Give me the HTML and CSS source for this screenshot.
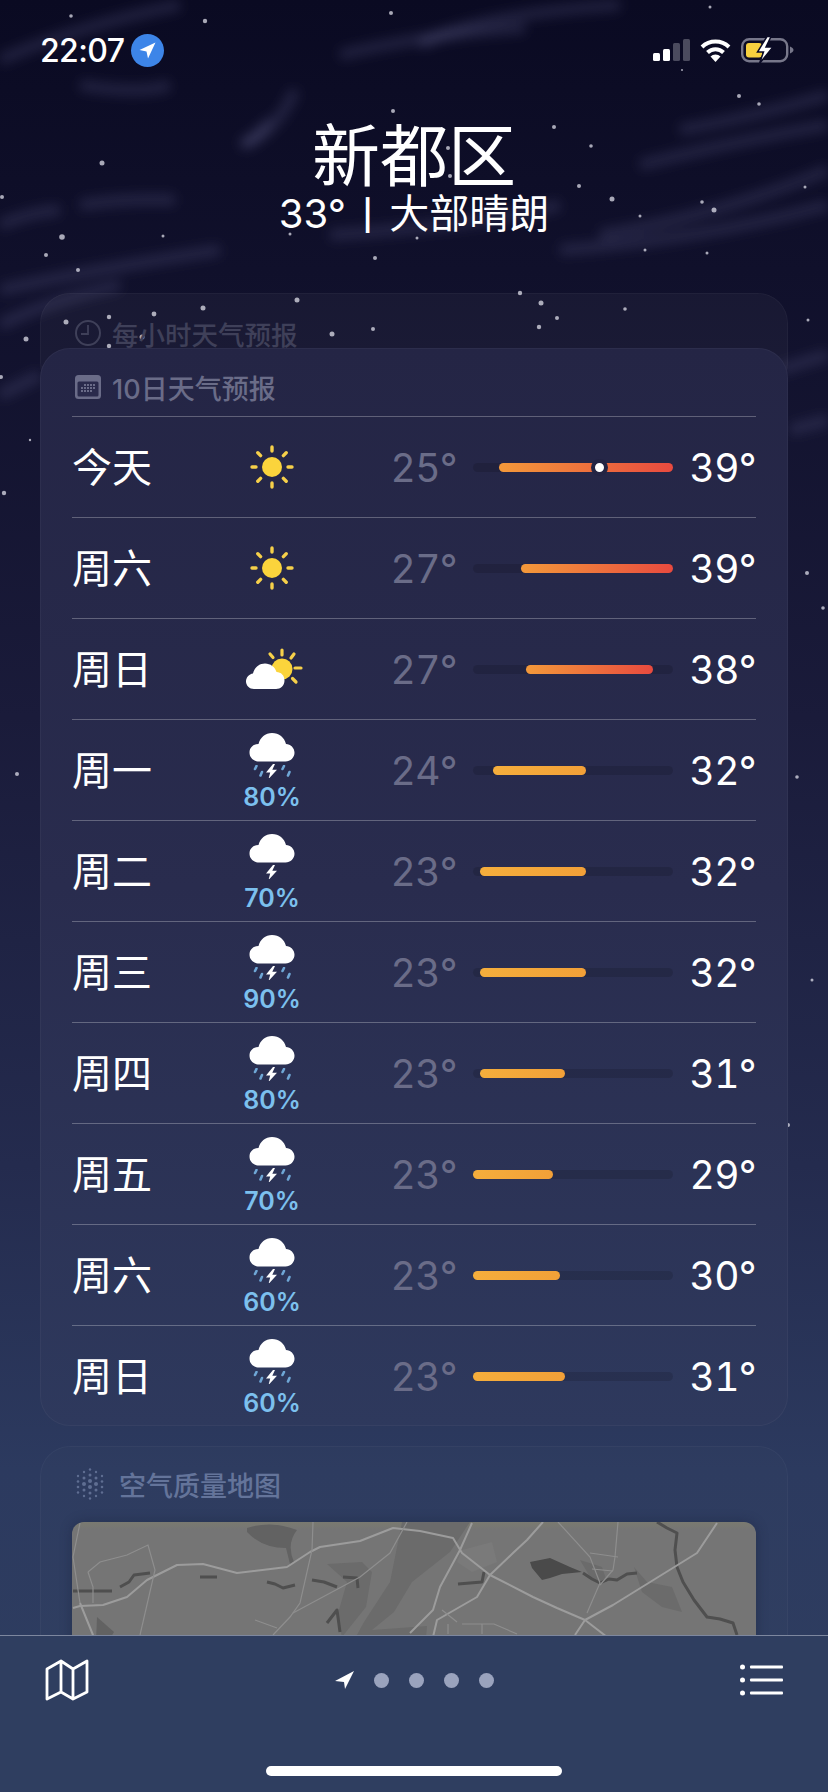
FILE: index.html
```html
<!DOCTYPE html>
<html lang="zh-CN">
<head>
    <meta charset="UTF-8">
    <meta name="viewport" content="width=device-width, initial-scale=1.0">
    <title>天气</title>
    <link rel="stylesheet" href="styles.css">
</head>
<body>
    <svg class="defs" width="0" height="0">
        <defs>
            <symbol id="sun" viewBox="0 0 44 44">
                <circle cx="22" cy="22" r="10" fill="#fbd43c"/>
                <g stroke="#f6d04a" stroke-width="3.4" stroke-linecap="round">
                    <path d="M22 2v4M22 38v4M2 22h4M38 22h4M7.8 7.8l2.8 2.8M33.4 33.4l2.8 2.8M7.8 36.2l2.8-2.8M33.4 10.6l2.8-2.8"/>
                </g>
            </symbol>
            <symbol id="cloud" viewBox="0 0 46 30">
                <path d="M10 29.5C4.5 29.5.5 25.500.5 20.500S4.500 12 9.500 12C11 5.500 16.500 1 23 1c7 0 12.500 4.500 14 11 4.500 0 8.500 4 8.500 8.700s-4 8.800-9 8.800z" fill="#fff"/>
            </symbol>
            <symbol id="bolt" viewBox="0 0 12 15">
                <path d="M7 0 0 8.500h4.200L2.500 15 11 5.700H6.300L9 0z" fill="#fff"/>
            </symbol>
            <symbol id="drops" viewBox="0 0 46 12">
                <g stroke="#6fa7d6" stroke-width="2.600" stroke-linecap="round">
                    <path d="M7.500 1 6 4M13 7 11.500 10.500M35 1 33.500 4M40.500 7 39 10.500"/>
                </g>
            </symbol>
        </defs>
    </svg>

    <div class="screen">
        <svg class="sky" viewBox="0 0 828 1792" width="828" height="1792">
            <defs>
                <filter id="soft" x="-20%" y="-200%" width="140%" height="500%">
                    <feGaussianBlur stdDeviation="6"/>
                </filter>
            </defs>
            <g class="wisps" filter="url(#soft)">
                <path d="M340 55Q420 35 525 28"/>
                <path d="M420 45Q470 15 620 5"/>
                <path d="M240 145Q275 135 295 90"/>
                <path d="M245 145Q270 125 265 120"/>
                <path d="M80 205Q130 198 175 200"/>
                <path d="M0 225Q30 212 60 210"/>
                <path d="M330 235Q480 225 560 205"/>
                <path d="M680 130Q760 115 828 95"/>
                <path d="M640 165Q740 140 828 125"/>
                <path d="M600 235Q720 215 828 170"/>
                <path d="M560 250Q700 240 828 205"/>
                <path d="M0 290Q90 270 220 250"/>
                <path d="M0 325Q50 300 120 285"/>
                <path d="M0 395Q20 385 40 375"/>
                <path d="M780 370Q810 360 828 355"/>
                <path d="M790 430Q810 425 828 420"/>
                <path d="M0 60Q80 25 180 5"/>
                <path d="M80 85Q140 95 170 85"/>
            </g>
            <g class="stars">
                <circle cx="71" cy="16" r="1.800"/><circle cx="205" cy="21" r="2.200"/><circle cx="391" cy="13" r="2"/>
                <circle cx="710" cy="7" r="1.500"/><circle cx="393" cy="111" r="2"/><circle cx="554" cy="127" r="2"/>
                <circle cx="591" cy="146" r="1.800"/><circle cx="739" cy="96" r="2"/><circle cx="759" cy="104" r="1.800"/>
                <circle cx="102" cy="163" r="2.500"/><circle cx="448" cy="148" r="2"/><circle cx="450" cy="176" r="2"/>
                <circle cx="579" cy="186" r="2"/><circle cx="612" cy="199" r="2.500"/><circle cx="702" cy="202" r="1.800"/>
                <circle cx="714" cy="210" r="2.500"/><circle cx="640" cy="216" r="1.500"/><circle cx="62" cy="237" r="2.800"/>
                <circle cx="163" cy="236" r="1.500"/><circle cx="46" cy="255" r="2"/><circle cx="375" cy="258" r="2"/>
                <circle cx="417" cy="238" r="1.500"/><circle cx="290" cy="234" r="1.500"/><circle cx="645" cy="250" r="1.500"/>
                <circle cx="707" cy="253" r="1.500"/><circle cx="805" cy="187" r="1.500"/><circle cx="2" cy="197" r="2"/>
                <circle cx="682" cy="70" r="1"/><circle cx="78" cy="270" r="2"/><circle cx="66" cy="322" r="2.500"/>
                <circle cx="109" cy="317" r="2.200"/><circle cx="154" cy="314" r="2.400"/><circle cx="203" cy="308" r="2.500"/>
                <circle cx="297" cy="300" r="2.500"/><circle cx="142" cy="337" r="2.500"/><circle cx="109" cy="346" r="2.200"/>
                <circle cx="332" cy="334" r="2.500"/><circle cx="373" cy="329" r="2"/><circle cx="520" cy="293" r="2.200"/>
                <circle cx="541" cy="303" r="2.500"/><circle cx="557" cy="318" r="2"/><circle cx="539" cy="327" r="2.200"/>
                <circle cx="625" cy="309" r="1.800"/><circle cx="26" cy="339" r="2.500"/><circle cx="1" cy="377" r="2"/>
                <circle cx="4" cy="493" r="2.200"/><circle cx="17" cy="774" r="2"/><circle cx="788" cy="1125" r="2"/>
                <circle cx="797" cy="777" r="1.800"/><circle cx="807" cy="573" r="2"/><circle cx="823" cy="608" r="1.800"/>
                <circle cx="808" cy="320" r="1.500"/><circle cx="30" cy="440" r="1.200"/><circle cx="812" cy="980" r="1.500"/>
            </g>
        </svg>

        <div class="status-bar">
            <div class="status-left">
                <span class="clock-time">22:07</span>
                <span class="loc-badge">
                    <svg width="17" height="17" viewBox="0 0 17 17"><path d="M16.500.500.500 8l7 1.500L9 16.500z" fill="#fff"/></svg>
                </span>
            </div>
            <div class="status-right">
                <svg class="signal" width="37" height="22" viewBox="0 0 37 22">
                    <rect x="0" y="14" width="7" height="8" rx="1.500" fill="#fff"/>
                    <rect x="10" y="10" width="7" height="12" rx="1.500" fill="#fff"/>
                    <rect x="20" y="4" width="7" height="18" rx="1.500" fill="#4b4b5e"/>
                    <rect x="30" y="0" width="7" height="22" rx="1.500" fill="#4b4b5e"/>
                </svg>
                <svg class="wifi" width="31" height="24" viewBox="0 0 31 24">
                    <path d="M2 9A19.500 19.500 0 0 1 29 9M7.500 14.500A11.500 11.500 0 0 1 23.500 14.500" fill="none" stroke="#fff" stroke-width="4"/>
                    <path d="M10.500 18.500a7 7 0 0 1 10 0l-5 5.500z" fill="#fff"/>
                </svg>
                <svg class="battery" width="53" height="28" viewBox="0 0 53 28">
                    <rect x="1.200" y="3.200" width="45" height="22" rx="7" fill="none" stroke="#77778a" stroke-width="2.400"/>
                    <rect x="5" y="7" width="16" height="14.500" rx="3" fill="#f7d03f"/>
                    <path d="M49 10.500c2 .7 3.500 2 3.500 3.500s-1.500 2.800-3.500 3.500z" fill="#77778a"/>
                    <path d="M26 .500 16.500 16h6L18.500 27.500 32 11h-7L30 .500z" fill="#fff" stroke="#0b0b26" stroke-width="1.500"/>
                </svg>
            </div>
        </div>

        <header class="place">
            <h1>新都区</h1>
            <p>33° <span class="pipe">|</span> 大部晴朗</p>
        </header>

        <section class="card card-back">
            <div class="card-title">
                <svg width="26" height="26" viewBox="0 0 26 26"><circle cx="13" cy="13" r="12" fill="none" stroke="#3f4059" stroke-width="2"/><path d="M13 5v9H6" fill="none" stroke="#3f4059" stroke-width="1.800"/></svg>
                <span>每小时天气预报</span>
            </div>
        </section>

        <section class="card card-main">
            <div class="card-title">
                <svg width="26" height="24" viewBox="0 0 26 24">
                    <rect width="26" height="24" rx="3.500" fill="#6a6c88"/>
                    <rect x="2.500" y="6.500" width="21" height="15" rx="1.500" fill="#2a2b4c"/>
                    <g fill="#6a6c88">
                        <rect x="9" y="9" width="2" height="2"/><rect x="12" y="9" width="2" height="2"/><rect x="15" y="9" width="2" height="2"/><rect x="18" y="9" width="2" height="2"/>
                        <rect x="6" y="12" width="2" height="2"/><rect x="9" y="12" width="2" height="2"/><rect x="12" y="12" width="2" height="2"/><rect x="15" y="12" width="2" height="2"/><rect x="18" y="12" width="2" height="2"/>
                        <rect x="6" y="15" width="2" height="2"/><rect x="9" y="15" width="2" height="2"/><rect x="12" y="15" width="2" height="2"/><rect x="15" y="15" width="2" height="2"/>
                    </g>
                </svg>
                <span>10日天气预报</span>
            </div>

            <div class="day-row">
                <span class="day">今天</span>
                <span class="sky-icon"><svg class="ic-sun" width="44" height="44"><use href="#sun"/></svg></span>
                <span class="low">25°</span>
                <span class="track"><span class="fill hot" style="left:26px;width:174px"></span><span class="now" style="left:126px"></span></span>
                <span class="high">39°</span>
            </div>
            <div class="day-row">
                <span class="day">周六</span>
                <span class="sky-icon"><svg class="ic-sun" width="44" height="44"><use href="#sun"/></svg></span>
                <span class="low">27°</span>
                <span class="track"><span class="fill hot" style="left:48px;width:152px"></span></span>
                <span class="high">39°</span>
            </div>
            <div class="day-row">
                <span class="day">周日</span>
                <span class="sky-icon">
                    <svg class="ic-partly" width="58" height="42" viewBox="0 0 58 42">
                        <circle cx="36" cy="21" r="10.500" fill="#fbd43c"/>
                        <path d="M36 2v5M48 6l-3 4M55 20h-6M50 34l-3.500-3.500M24 6l3 3.500" stroke="#f6d04a" stroke-width="3.200" stroke-linecap="round"/>
                        <path d="M8 41C3.500 41 0 37.500 0 33.500S3 26 7 25.500C8.500 19.500 13 15.500 19 15.500c5.500 0 10 3.500 11.500 8.500 4.500 0 8 3.500 8 8.500s-4 8.500-8.500 8.500z" fill="#fff"/>
                    </svg>
                </span>
                <span class="low">27°</span>
                <span class="track"><span class="fill hot" style="left:53px;width:127px"></span></span>
                <span class="high">38°</span>
            </div>
            <div class="day-row">
                <span class="day">周一</span>
                <span class="sky-icon storm">
                    <svg width="46" height="46" viewBox="0 0 46 46"><use href="#cloud" width="46" height="30"/><use href="#drops" y="33" width="46" height="12"/><use href="#bolt" x="17" y="32" width="12" height="15"/></svg>
                    <span class="rain">80%</span>
                </span>
                <span class="low">24°</span>
                <span class="track"><span class="fill warm" style="left:20px;width:93px"></span></span>
                <span class="high">32°</span>
            </div>
            <div class="day-row">
                <span class="day">周二</span>
                <span class="sky-icon storm">
                    <svg width="46" height="46" viewBox="0 0 46 46"><use href="#cloud" width="46" height="30"/><use href="#bolt" x="17" y="32" width="12" height="15"/></svg>
                    <span class="rain">70%</span>
                </span>
                <span class="low">23°</span>
                <span class="track"><span class="fill warm" style="left:7px;width:106px"></span></span>
                <span class="high">32°</span>
            </div>
            <div class="day-row">
                <span class="day">周三</span>
                <span class="sky-icon storm">
                    <svg width="46" height="46" viewBox="0 0 46 46"><use href="#cloud" width="46" height="30"/><use href="#drops" y="33" width="46" height="12"/><use href="#bolt" x="17" y="32" width="12" height="15"/></svg>
                    <span class="rain">90%</span>
                </span>
                <span class="low">23°</span>
                <span class="track"><span class="fill warm" style="left:7px;width:106px"></span></span>
                <span class="high">32°</span>
            </div>
            <div class="day-row">
                <span class="day">周四</span>
                <span class="sky-icon storm">
                    <svg width="46" height="46" viewBox="0 0 46 46"><use href="#cloud" width="46" height="30"/><use href="#drops" y="33" width="46" height="12"/><use href="#bolt" x="17" y="32" width="12" height="15"/></svg>
                    <span class="rain">80%</span>
                </span>
                <span class="low">23°</span>
                <span class="track"><span class="fill warm" style="left:7px;width:85px"></span></span>
                <span class="high">31°</span>
            </div>
            <div class="day-row">
                <span class="day">周五</span>
                <span class="sky-icon storm">
                    <svg width="46" height="46" viewBox="0 0 46 46"><use href="#cloud" width="46" height="30"/><use href="#drops" y="33" width="46" height="12"/><use href="#bolt" x="17" y="32" width="12" height="15"/></svg>
                    <span class="rain">70%</span>
                </span>
                <span class="low">23°</span>
                <span class="track"><span class="fill warm" style="left:0;width:80px"></span></span>
                <span class="high">29°</span>
            </div>
            <div class="day-row">
                <span class="day">周六</span>
                <span class="sky-icon storm">
                    <svg width="46" height="46" viewBox="0 0 46 46"><use href="#cloud" width="46" height="30"/><use href="#drops" y="33" width="46" height="12"/><use href="#bolt" x="17" y="32" width="12" height="15"/></svg>
                    <span class="rain">60%</span>
                </span>
                <span class="low">23°</span>
                <span class="track"><span class="fill warm" style="left:0;width:87px"></span></span>
                <span class="high">30°</span>
            </div>
            <div class="day-row">
                <span class="day">周日</span>
                <span class="sky-icon storm">
                    <svg width="46" height="46" viewBox="0 0 46 46"><use href="#cloud" width="46" height="30"/><use href="#drops" y="33" width="46" height="12"/><use href="#bolt" x="17" y="32" width="12" height="15"/></svg>
                    <span class="rain">60%</span>
                </span>
                <span class="low">23°</span>
                <span class="track"><span class="fill warm" style="left:0;width:92px"></span></span>
                <span class="high">31°</span>
            </div>
        </section>

        <section class="card card-air">
            <div class="card-title air-title">
                <svg width="28" height="32" viewBox="0 0 28 32">
                    <g fill="#5f6e92">
                        <circle cx="14" cy="1.500" r="1.200"/><circle cx="8" cy="4" r="1.200"/><circle cx="20" cy="4" r="1.200"/>
                        <circle cx="14" cy="7" r="1.500"/><circle cx="2" cy="8" r="1.200"/><circle cx="26" cy="8" r="1.200"/>
                        <circle cx="8" cy="10" r="1.500"/><circle cx="20" cy="10" r="1.500"/><circle cx="14" cy="13" r="2"/>
                        <circle cx="2" cy="13.500" r="1.300"/><circle cx="26" cy="13.500" r="1.300"/><circle cx="8" cy="16" r="2"/>
                        <circle cx="20" cy="16" r="2"/><circle cx="14" cy="19" r="2"/><circle cx="2" cy="19" r="1.300"/>
                        <circle cx="26" cy="19" r="1.300"/><circle cx="8" cy="22" r="1.500"/><circle cx="20" cy="22" r="1.500"/>
                        <circle cx="14" cy="25" r="1.500"/><circle cx="2" cy="24.500" r="1.200"/><circle cx="26" cy="24.500" r="1.200"/>
                        <circle cx="8" cy="28" r="1.200"/><circle cx="20" cy="28" r="1.200"/><circle cx="14" cy="30.500" r="1.200"/>
                    </g>
                </svg>
                <span>空气质量地图</span>
            </div>
            <div class="air-map">
                <svg width="684" height="140" viewBox="0 0 684 140">
                    <g fill="#6b6b6b">
                        <path d="M330 0 398 0 378 30 340 60 322 90 300 108 355 104 352 140 270 140 292 100 318 60 325 25z"/>
                        <path d="M255 42 290 40 300 50 294 85 270 115 265 95 275 60z"/>
                        <path d="M562 45 575 60 600 65 610 90 590 85 570 70z"/>
                        <path d="M508 38 530 45 535 60 520 58z"/>
                    </g>
                    <path d="M390 28 420 20 425 40 400 50 385 40z" fill="#7a7a7a"/>
                    <path d="M175 6Q200 -2 225 8 214 22 222 40L218 42 214 26Q190 26 175 10z" fill="#626262"/>
                    <path d="M25 95 42 110 30 130 24 120z" fill="#626262"/>
                    <path d="M458 40 478 36 498 45 510 50 490 52 478 56 470 58 460 46z" fill="#4a4a4a"/>
                    <g class="rivers">
                        <path d="M585 0 595 6 605 11 603 28 605 45 611 60 622 78 635 95 648 97 661 101 665 113"/>
                        <path d="M511 51 520 57 528 61 537 57 545 58 555 52 565 51"/>
                        <path d="M48 65 57 60 62 53 70 52 78 51"/>
                        <path d="M128 55H145"/>
                        <path d="M195 60 203 62 211 66 223 63"/>
                        <path d="M240 58 252 60 265 65"/>
                        <path d="M271 55 285 56 286 66"/>
                        <path d="M1 69H40"/>
                        <path d="M255 101 265 88 268 110"/>
                        <path d="M386 62 410 60 412 50"/>
                    </g>
                    <g class="roads">
                        <path d="M1 86 8 84 31 83 55 75 75 58 105 43 131 42 165 51 215 45 238 30 248 25 288 19 321 6 348 9 381 16 390 31 418 53 461 75 485 86 513 98 541 83 625 31 645 1"/>
                        <path d="M418 53 441 31 455 18 471 0"/>
                        <path d="M418 53 405 75 365 98 361 115"/>
                        <path d="M400 1 388 28 368 65 361 88 338 111"/>
                        <path d="M513 98 535 115M513 98 503 113"/>
                        <path d="M8 81 21 113 28 125"/>
                    </g>
                    <g class="lanes">
                        <path d="M486 0 518 35 528 61 515 91"/>
                        <path d="M546 0 543 35 541 48 528 63"/>
                        <path d="M518 31 546 35M520 47 541 49"/>
                        <path d="M241 0 240 28 228 81 218 95 201 113"/>
                        <path d="M335 0 318 31 288 55 221 91"/>
                        <path d="M16 50 28 40 55 33 76 23 83 48 68 113"/>
                        <path d="M16 50 21 65 21 81"/>
                        <path d="M8 1 1 35 8 81"/>
                        <path d="M183 98 205 106"/>
                        <path d="M390 102H422L445 112M410 102V112M376 102V112"/>
                        <path d="M370 88 385 100"/>
                    </g>
                </svg>
                <span class="map-label">高新城区</span>
            </div>
        </section>

        <nav class="tab-bar">
            <div class="tab-row">
                <svg width="44" height="42" viewBox="0 0 44 42">
                    <path d="M2 10 16 2 28 10 42 2V33L28 40 16 33 2 40z M16 2V33M28 10V40" fill="none" stroke="#fff" stroke-width="2.800" stroke-linejoin="round"/>
                </svg>
                <div class="pager">
                    <svg width="19" height="18" viewBox="0 0 19 18"><path d="M19 0 0 10 9 11 10 18z" fill="#fff"/></svg>
                    <span class="page-dot"></span>
                    <span class="page-dot"></span>
                    <span class="page-dot"></span>
                    <span class="page-dot"></span>
                </div>
                <svg width="43" height="32" viewBox="0 0 43 32">
                    <g fill="#fff">
                        <circle cx="2.500" cy="3" r="2.500"/><circle cx="2.500" cy="16" r="2.500"/><circle cx="2.500" cy="29" r="2.500"/>
                        <rect x="10" y="1.500" width="33" height="3" rx="1"/><rect x="10" y="14.500" width="33" height="3" rx="1"/><rect x="10" y="27.500" width="33" height="3" rx="1"/>
                    </g>
                </svg>
            </div>
            <div class="home-bar"></div>
        </nav>
    </div>
</body>
</html>
```

FILE: styles.css
```css
:root {
    --muted: #6a6c88;
    --rain: #7cc0ee;
    --line: rgba(255, 255, 255, 0.27);
}

* {
    margin: 0;
    padding: 0;
    box-sizing: border-box;
    font-family: Inter, 'Noto Sans CJK SC', sans-serif;
}

body {
    background-color: #0b0b26;
}

.defs {
    position: absolute;
}

.screen {
    position: relative;
    width: 828px;
    height: 1792px;
    overflow: hidden;
    color: white;
    background: linear-gradient(180deg, #0a0a22 0%, #10102b 15%, #1a1b3a 40%, #242b4e 65%, #2c3a5f 82%, #2f3e60 100%);
}

.sky {
    position: absolute;
    top: 0;
    left: 0;
}

.wisps path {
    fill: none;
    stroke: rgba(125, 125, 175, 0.2);
    stroke-width: 11;
}

.stars circle {
    fill: rgba(235, 235, 245, 0.7);
}

/* status bar */
.status-bar {
    position: relative;
    display: flex;
    justify-content: space-between;
    align-items: center;
    height: 100px;
    padding: 0 34px 0 40px;
}

.status-left {
    display: flex;
    align-items: center;
    gap: 7px;
}

.clock-time {
    font-size: 32px;
    font-weight: 500;
    letter-spacing: -0.6px;
}

.loc-badge {
    display: flex;
    align-items: center;
    justify-content: center;
    width: 33px;
    height: 33px;
    border-radius: 50%;
    background-color: #3d85e8;
}

.status-right {
    display: flex;
    align-items: center;
    gap: 10px;
}

/* place heading */
.place {
    position: relative;
    height: 193px;
    padding-top: 20px;
    text-align: center;
}

.place h1 {
    font-size: 68px;
    font-weight: 400;
    line-height: 72px;
}

.place p {
    font-size: 40px;
    font-weight: 400;
    line-height: 44px;
}

.pipe {
    font-size: 30px;
    font-weight: 600;
    padding: 0 5px;
    vertical-align: 2px;
}

/* cards */
.card {
    position: relative;
    width: 748px;
    margin-left: 40px;
    border-radius: 30px;
    padding: 0 32px;
}

.card-back {
    height: 100px;
    margin-bottom: -45px;
    background-color: rgba(255, 255, 255, 0.035);
    box-shadow: inset 0 0 0 1px rgba(255, 255, 255, 0.035);
}

.card-main {
    background: linear-gradient(180deg, #242545 0%, #292c4e 50%, #2e395d 100%);
    box-shadow: inset 0 0 0 1px rgba(255, 255, 255, 0.04);
    margin-bottom: 20px;
}

.card-air {
    height: 400px;
    background-color: rgba(255, 255, 255, 0.012);
    box-shadow: inset 0 0 0 1px rgba(255, 255, 255, 0.035);
}

.card-title {
    display: flex;
    align-items: center;
    gap: 11px;
    height: 68px;
    padding: 10px 3px 0;
    font-size: 27px;
    font-weight: 500;
    color: var(--muted);
}

.card-back .card-title {
    padding-top: 12px;
    font-size: 26.5px;
    color: #3f4059;
}

.air-title {
    height: 76px;
    padding: 0 0 0 4px;
    gap: 15px;
    color: #64749a;
}

/* day rows */
.day-row {
    display: flex;
    align-items: center;
    height: 101px;
    border-top: 1px solid var(--line);
}

.day {
    width: 150px;
    padding-bottom: 5px;
    font-size: 40px;
    font-weight: 400;
}

.sky-icon {
    display: flex;
    flex-direction: column;
    align-items: center;
    width: 100px;
}

.ic-partly {
    margin-left: 6px;
}

.storm {
    gap: 6px;
    padding-top: 2px;
}

.rain {
    font-size: 25px;
    font-weight: 600;
    line-height: 26px;
    color: var(--rain);
}

.low,
.high {
    font-size: 39px;
    font-weight: 400;
    letter-spacing: -0.6px;
    font-variant-numeric: tabular-nums;
    text-align: right;
}

.low {
    width: 135px;
    color: var(--muted);
}

.high {
    width: 83px;
}

.track {
    position: relative;
    width: 200px;
    height: 9px;
    margin-left: 16px;
    border-radius: 5px;
    background-color: rgba(0, 0, 0, 0.13);
}

.fill {
    position: absolute;
    top: 0;
    height: 9px;
    border-radius: 5px;
}

.hot {
    background: linear-gradient(90deg, #f3993a, #e84a3f);
}

.warm {
    background: linear-gradient(90deg, #f5ae3c, #f2a038);
}

.now {
    position: absolute;
    top: -4px;
    width: 17px;
    height: 17px;
    margin-left: -8px;
    border: 4px solid #232443;
    border-radius: 50%;
    background-color: white;
}

/* air quality map */
.air-map {
    position: relative;
    height: 240px;
    border-radius: 12px;
    overflow: hidden;
    background: linear-gradient(180deg, #7a7a70 0, #757575 8px);
    box-shadow: 0 0 12px rgba(20, 25, 50, 0.35);
}

.air-map svg {
    display: block;
}

.rivers path {
    fill: none;
    stroke: #4f4f4f;
    stroke-width: 3;
    stroke-linejoin: round;
}

.roads path {
    fill: none;
    stroke: #9c9c9c;
    stroke-width: 2;
    stroke-linejoin: round;
}

.lanes path {
    fill: none;
    stroke: #8e8e8e;
    stroke-width: 1.200;
}

.map-label {
    position: absolute;
    top: 108px;
    left: 352px;
    font-size: 24px;
    font-weight: 500;
    letter-spacing: 1px;
}

/* bottom bar */
.tab-bar {
    position: absolute;
    left: 0;
    right: 0;
    bottom: 0;
    height: 157px;
    border-top: 1px solid #7d879f;
    background-color: #2f3e60;
}

.tab-row {
    display: flex;
    justify-content: space-between;
    align-items: center;
    height: 88px;
    padding: 0 45px;
}

.pager {
    display: flex;
    align-items: center;
    gap: 20px;
}

.page-dot {
    width: 15px;
    height: 15px;
    border-radius: 50%;
    background-color: #9aa3bd;
}

.home-bar {
    width: 296px;
    height: 10px;
    margin: 42px auto 0;
    border-radius: 5px;
    background-color: white;
}
```
